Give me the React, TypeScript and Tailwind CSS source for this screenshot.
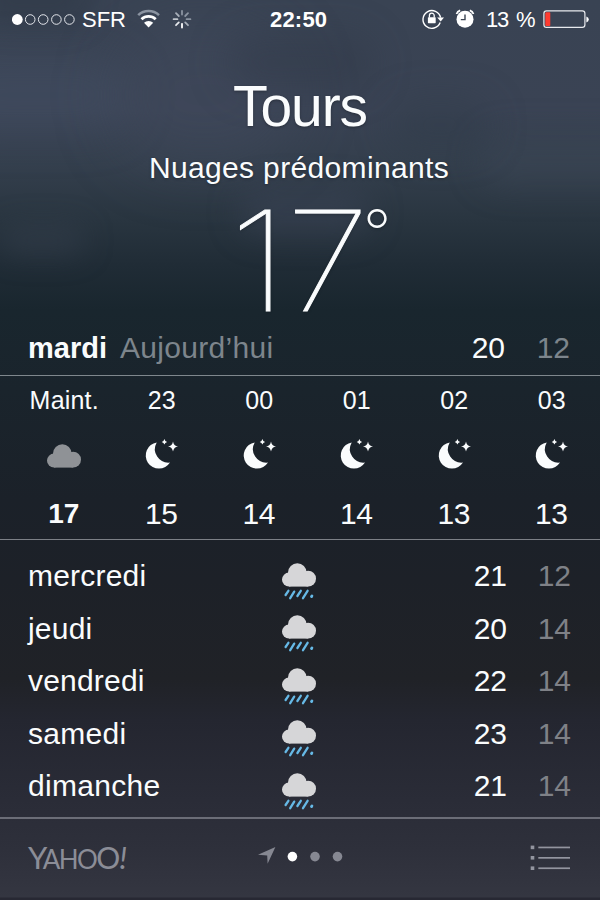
import type { ReactNode } from "react";

const hours = [
  { label: "Maint.", temp: "17", now: true },
  { label: "23", temp: "15", now: false },
  { label: "00", temp: "14", now: false },
  { label: "01", temp: "14", now: false },
  { label: "02", temp: "13", now: false },
  { label: "03", temp: "13", now: false },
];

const days = [
  { name: "mercredi", high: "21", low: "12", spacing: "tracking-[0.2px]" },
  { name: "jeudi", high: "20", low: "14", spacing: "tracking-[0.2px]" },
  { name: "vendredi", high: "22", low: "14", spacing: "tracking-[0.2px]" },
  { name: "samedi", high: "23", low: "14", spacing: "tracking-[0.3px]" },
  { name: "dimanche", high: "21", low: "14", spacing: "tracking-[0.3px]" },
];

function CloudShape({ fill }: { fill: string }) {
  return (
    <g fill={fill}>
      <circle cx="7" cy="16.6" r="7" />
      <circle cx="15.3" cy="9.5" r="9.3" />
      <circle cx="26.1" cy="15.7" r="7.9" />
      <rect x="7" y="10" width="19.2" height="13.6" />
    </g>
  );
}

function Cloud() {
  return (
    <svg width="34" height="24" viewBox="0 0 34 24">
      <CloudShape fill="#8f9296" />
    </svg>
  );
}

function RainCloud() {
  return (
    <svg width="34" height="37" viewBox="0 0 34 37">
      <CloudShape fill="#d6d6d8" />
      <g stroke="#66b9e6" strokeWidth="2.3" strokeLinecap="round">
        <path d="M6.4 27.8 L3.6 32" />
        <path d="M12.2 28.6 L8.2 35.2" />
        <path d="M18.8 27.8 L15.4 33" />
        <path d="M25.6 27.8 L21 35.2" />
        <path d="M29.9 33 L29.5 33.6" strokeWidth="2.8" />
      </g>
    </svg>
  );
}

function Moon() {
  return (
    <svg width="33" height="30" viewBox="0 0 33 30" overflow="visible">
      <g fill="#fafcfd">
        <path d="M11.7 2.4 A13.2 13.2 0 1 0 25 22.6 A13.6 13.6 0 0 1 11.7 2.4 Z" />
        <path d="M28 1.4 Q28.7 5.8 33 6.5 Q28.7 7.2 28 11.6 Q27.3 7.2 23 6.5 Q27.3 5.8 28 1.4 Z" />
        <path d="M19.4 -1 Q19.9 1.4 22.1 1.9 Q19.9 2.4 19.4 4.6 Q18.9 2.4 16.7 1.9 Q18.9 1.4 19.4 -1 Z" />
      </g>
    </svg>
  );
}

function StatusBar() {
  return (
    <div className="flex h-10 items-center text-[22px] leading-10 text-white">
      <svg className="ml-3" width="64" height="40" viewBox="0 0 64 40">
        <circle cx="5.3" cy="19.5" r="5.4" fill="#fff" />
        <g fill="none" stroke="#e4e7ec" strokeWidth="1">
          <circle cx="18.2" cy="19.5" r="4.8" />
          <circle cx="31.2" cy="19.5" r="4.8" />
          <circle cx="44.4" cy="19.5" r="4.8" />
          <circle cx="57.4" cy="19.5" r="4.8" />
        </g>
      </svg>
      <span className="ml-[6px] w-[49px]">SFR</span>
      <svg className="ml-[5px]" width="26" height="40" viewBox="0 0 26 40">
        <g fill="none">
          <path d="M2.2 15.1 A15.2 15.2 0 0 1 23 15.1" stroke="#8b94a1" strokeWidth="2.6" />
          <path d="M5.5 19.2 A10.4 10.4 0 0 1 19.7 19.2" stroke="#fff" strokeWidth="2.8" />
        </g>
        <path d="M12.6 27.4 L8 22.8 A6.6 6.6 0 0 1 17.2 22.8 Z" fill="#fff" />
      </svg>
      <svg className="ml-[9px]" width="22" height="40" viewBox="-11 -19.2 22 40">
        <g strokeWidth="1.8" strokeLinecap="round">
          <path d="M0 -4.6V-8.4" stroke="#8b94a1" />
          <path d="M3.2 -3.2L6 -6" stroke="#8b94a1" />
          <path d="M4.6 0H8.4" stroke="#8b94a1" />
          <path d="M3.2 3.2L6 6" stroke="#a7aeb8" />
          <path d="M0 4.6V8.4" stroke="#fff" />
          <path d="M-3.2 3.2L-6 6" stroke="#e6e8ec" />
          <path d="M-4.6 0H-8.4" stroke="#c0c5cc" />
          <path d="M-3.2 -3.2L-6 -6" stroke="#a7aeb8" />
        </g>
      </svg>
      <span className="ml-[77px] w-[58px] font-bold tracking-[0.2px]">22:50</span>
      <svg className="ml-[93px]" width="24" height="40" viewBox="0 0 24 40">
        <path d="M19.2 22.6 A8.9 8.9 0 1 1 19.6 17.6" fill="none" stroke="#fff" strokeWidth="1.4" />
        <path d="M16.2 17.4 H23 L19.7 21.4 Z" fill="#fff" />
        <rect x="6.9" y="17.2" width="7.8" height="6" rx="0.6" fill="#fff" />
        <path d="M8.4 17.6 V15.6 A2.4 2.4 0 0 1 13.2 15.6 V17.6" fill="none" stroke="#fff" strokeWidth="1.3" />
      </svg>
      <svg className="ml-[10px]" width="20" height="40" viewBox="0 0 20 40">
        <circle cx="10" cy="19.2" r="8.5" fill="#fff" />
        <path d="M1.5 14 Q2.4 11.4 5.2 10.4 M18.5 14 Q17.6 11.4 14.8 10.4" fill="none" stroke="#fff" strokeWidth="1.7" />
        <path d="M10 14.4 V19.6 H5.8" fill="none" stroke="#3a4352" strokeWidth="1.4" />
      </svg>
      <span className="ml-[11px] w-[24px] tracking-[-1.2px]">13</span>
      <span className="ml-[6px] w-5">%</span>
      <svg className="ml-[7px]" width="46" height="40" viewBox="0 0 46 40">
        <rect x="0.9" y="10.8" width="41" height="16.6" rx="2.6" fill="none" stroke="#e8eaee" strokeWidth="1.2" />
        <rect x="2.3" y="12.2" width="5" height="13.8" rx="0.8" fill="#ff3b30" />
        <path d="M43.4 16.4 Q45.8 17.4 45.8 19.4 Q45.8 21.4 43.4 22.4 Z" fill="#fff" />
      </svg>
    </div>
  );
}

function Temp({ children, className = "" }: { children: ReactNode; className?: string }) {
  return <span className={"text-[30px] leading-[34px] " + className}>{children}</span>;
}

function Sky() {
  return (
    <div className="absolute inset-0 overflow-hidden bg-[linear-gradient(180deg,#394353_0px,#3a4354_110px,#343f4d_165px,#2a3641_215px,#202c36_265px,#19262e_310px,#1a242c_390px,#1b2129_500px,#1d2128_580px,#202227_680px,#242630_720px,#2a2c37_800px,#2e303b_850px,#343641_897px,#272833_898px)]">
      <div className="absolute -left-[60px] top-[60px] h-[70px] w-[190px] rounded-full bg-[#46536a]/40 blur-[22px]" />
      <div className="absolute left-[110px] top-[20px] h-[150px] w-[190px] rounded-full bg-[#444c62]/35 blur-[28px]" />
      <div className="absolute left-[225px] top-[35px] h-[55px] w-[150px] rounded-full bg-[#2d3644]/35 blur-[18px]" />
      <div className="absolute left-[240px] top-[190px] h-[44px] w-[130px] rounded-full bg-[#3e4559]/50 blur-[16px]" />
      <div className="absolute left-0 top-[225px] h-[30px] w-[85px] rounded-full bg-[#36404e]/50 blur-[14px]" />
      <div className="absolute left-[480px] top-[135px] h-[50px] w-[180px] rounded-full bg-[#3b4554]/55 blur-[16px]" />
      <div className="absolute left-[390px] top-[100px] h-[50px] w-[100px] rounded-full bg-[#2e3947]/40 blur-[18px]" />
      <div className="absolute -left-[20px] -top-[30px] h-[55px] w-[110px] rounded-full bg-[#2b3542]/40 blur-[14px]" />
    </div>
  );
}

export default function App() {
  return (
    <main className="relative h-[900px] w-[600px] overflow-hidden font-['Liberation_Sans',Arial,sans-serif] text-[#fafcfd]">
      <Sky />
      <div className="relative flex h-full flex-col">
        <StatusBar />

        <header className="flex h-[281px] flex-col items-center [text-shadow:0_1px_3px_rgba(0,0,0,0.3)]">
          <h1 className="mt-[34px] text-[57px] leading-[64px] tracking-[-1.1px]">Tours</h1>
          <p className="mt-[13px] pr-[2px] text-[30px] leading-[34px] tracking-[0.35px]">Nuages prédominants</p>
          <div className="mt-[5px] flex w-full pl-[229px] font-['Inter',sans-serif] text-[139px] font-thin leading-[142px]">
            <span className="w-[57px] origin-left scale-x-[1.16] [-webkit-text-stroke:0.9px_#fafcfd]">1</span>
            <span className="w-[77px] origin-left scale-x-[1.1] [-webkit-text-stroke:0.9px_#fafcfd]">7</span>
            <span className="mt-[11px] text-[62px] font-extralight leading-[62px]">°</span>
          </div>
        </header>

        <section className="flex h-[55px] items-center border-b border-[#7f878d] pb-px">
          <h2 className="ml-7 w-[92px] text-[29px] font-bold leading-[34px]">mardi</h2>
          <span className="text-[30px] leading-[34px] tracking-[0.3px] text-[#7d858c]">Aujourd’hui</span>
          <Temp className="ml-auto w-[65px]">20</Temp>
          <Temp className="mr-[30px] text-[#7d858c]">12</Temp>
        </section>

        <section className="grid h-[164px] grid-cols-6 border-b border-[#7c8086] pl-[15px]">
          {hours.map((h) => (
            <div key={h.label} className="flex flex-col items-center">
              <span className="mt-[10px] pl-px text-[25px] leading-7 tracking-[0.2px]">{h.label}</span>
              <div className="mt-[26px] flex h-[30px] items-start">
                {h.now ? <div className="pt-[4px] pl-px"><Cloud /></div> : <div className="ml-px"><Moon /></div>}
              </div>
              <Temp className={h.now ? "mt-[27px] text-[28px]! font-bold" : "mt-[27px] tracking-[-0.4px]"}>{h.temp}</Temp>
            </div>
          ))}
        </section>

        <section className="flex h-[277px] flex-col pt-[10px]">
          {days.map((d) => (
            <div key={d.name} className="flex h-[52.5px] items-center">
              <span className={"ml-7 w-[254px] text-[30px] leading-[34px] " + d.spacing}>{d.name}</span>
              <div className="pt-[10px]"><RainCloud /></div>
              <Temp className="ml-auto w-[64px]">{d.high}</Temp>
              <Temp className="mr-[29px] text-[#7f8187]">{d.low}</Temp>
            </div>
          ))}
        </section>

        <footer className="flex h-[83px] items-start border-t-2 border-[#6b6d77]">
          <div className="ml-7 mt-[21px] flex h-[34px] w-[229px] items-baseline font-['Lato',sans-serif] leading-[34px] text-[#8b8d97]">
            <span className="text-[31px] tracking-[-4.5px]">Y</span>
            <span className="text-[26px] tracking-[-1.6px]">AHO</span>
            <span className="text-[30px] tracking-[-1px]">O</span>
            <span className="text-[31px] italic">!</span>
          </div>
          <svg className="mt-[27px]" width="90" height="22" viewBox="0 0 90 22">
            <path d="M18.4 1 L10.6 17.8 L10.2 9.4 L1 8.8 Z" fill="#868892" />
            <circle cx="35.4" cy="10.6" r="4.8" fill="#fff" />
            <circle cx="58" cy="10.6" r="4.8" fill="#868892" />
            <circle cx="80.5" cy="10.6" r="4.8" fill="#868892" />
          </svg>
          <svg className="ml-auto mr-[29px] mt-[26px]" width="41" height="28" viewBox="0 0 41 28">
            <g fill="#93959f">
              <rect x="0.7" y="0.6" width="3.6" height="3.6" />
              <rect x="0.7" y="11" width="3.6" height="3.6" />
              <rect x="0.7" y="21.4" width="3.6" height="3.6" />
              <rect x="8.3" y="1.6" width="31.7" height="1.7" />
              <rect x="8.3" y="12" width="31.7" height="1.7" />
              <rect x="8.3" y="22.4" width="31.7" height="1.7" />
            </g>
          </svg>
        </footer>
      </div>
    </main>
  );
}
